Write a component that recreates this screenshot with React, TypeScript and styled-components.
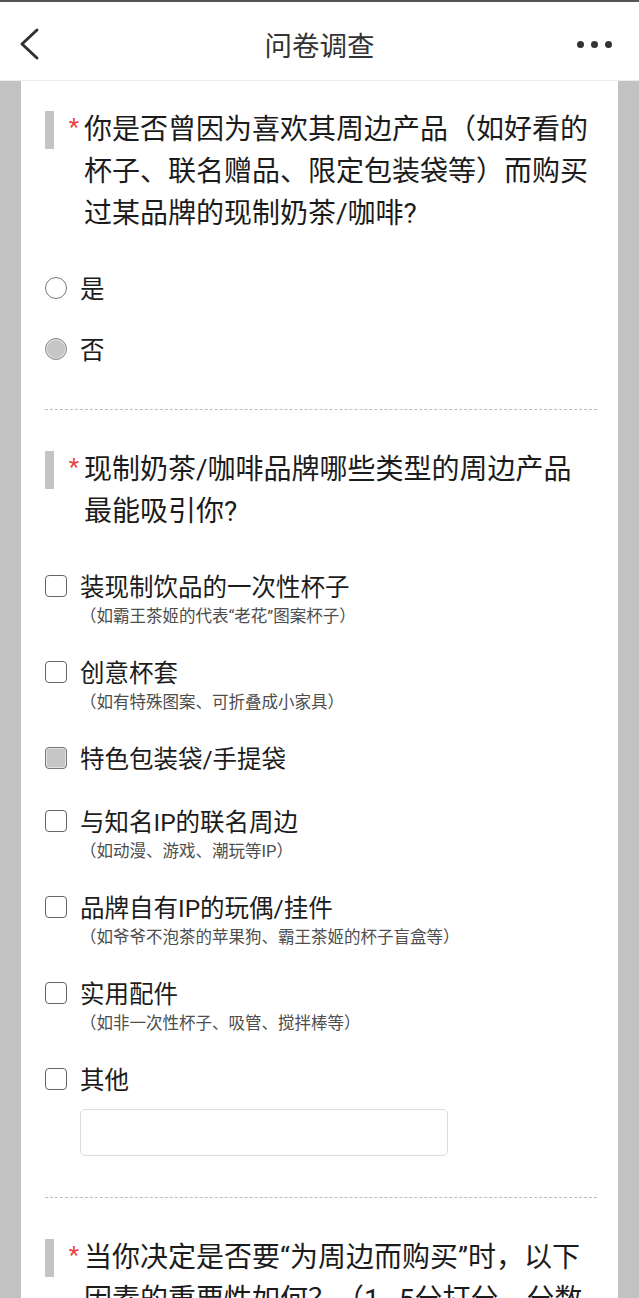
import React from "react";
import styled, { createGlobalStyle } from "styled-components";

const GlobalStyle = createGlobalStyle`
  html, body {
    margin: 0;
    padding: 0;
  }
  body {
    background: #c2c2c2;
    font-family: Roboto, "Noto Sans CJK SC", sans-serif;
    color: #1c1c1c;
  }
`;

const Header = styled.header`
  display: grid;
  grid-template-columns: 1fr auto 1fr;
  align-items: center;
  height: 72px;
  padding: 6px 27px 0 27px;
  background: #fff;
  border-top: 2px solid #555;
  border-bottom: 1px solid #ececec;
`;

const Title = styled.h1`
  margin: 0;
  font-size: 27.5px;
  font-weight: 400;
  color: #333;
`;

const BackIcon = styled.svg`
  width: 22px;
  height: 34px;
  margin-left: -9px;
`;

const Dots = styled.div`
  display: flex;
  justify-self: end;
  gap: 7px;
  span {
    width: 7px;
    height: 7px;
    border-radius: 50%;
    background: #333;
  }
`;

const Card = styled.main`
  margin: 0 21px;
  background: #fff;
  min-height: 1400px;
`;

const Section = styled.section<{ $first?: boolean; $last?: boolean }>`
  margin: 0 21px 0 24px;
  padding: ${(p) => (p.$first ? 28 : 39)}px 0 ${(p) => (p.$last ? 200 : 41)}px;
  border-bottom: ${(p) => (p.$last ? "none" : "1px dashed #bdbdbd")};
`;

const QTitle = styled.div`
  display: flex;
  align-items: flex-start;
`;

const Bar = styled.span`
  flex: none;
  width: 9px;
  height: 38px;
  margin-top: 2px;
  background: #c4c4c4;
`;

const Star = styled.span`
  flex: none;
  width: 30px;
  padding-right: 5px;
  box-sizing: border-box;
  text-align: right;
  font-size: 24px;
  line-height: 36px;
  color: #e4463e;
`;

const QText = styled.div`
  flex: 1;
  padding-right: 4px;
  font-size: 28px;
  line-height: 42px;
  color: #1c1c1c;
`;

const Options = styled.div<{ $gap: number }>`
  display: flex;
  flex-direction: column;
  gap: ${(p) => p.$gap}px;
  margin-top: 33px;
`;

const Option = styled.label`
  display: flex;
  flex-direction: column;
`;

const OptionRow = styled.div`
  display: flex;
  align-items: center;
  height: 39px;
  gap: 13px;
`;

const OptionText = styled.span`
  font-size: 24.5px;
  color: #1c1c1c;
`;

const SubText = styled.span`
  padding-left: 35px;
  font-size: 16.5px;
  line-height: 23px;
  color: #4d4d4d;
`;

const Radio = styled.span<{ $checked?: boolean }>`
  flex: none;
  box-sizing: border-box;
  width: 22px;
  height: 22px;
  border-radius: 50%;
  border: 1.5px solid ${(p) => (p.$checked ? "#8a8a8a" : "#777")};
  background: ${(p) => (p.$checked ? "#c6c6c6" : "#fff")};
  box-shadow: ${(p) => (p.$checked ? "inset 0 0 0 1px #e6e6e6" : "none")};
`;

const Check = styled.span<{ $checked?: boolean }>`
  flex: none;
  box-sizing: border-box;
  width: 22px;
  height: 22px;
  border-radius: 4px;
  border: 1.8px solid ${(p) => (p.$checked ? "#777" : "#666")};
  background: ${(p) => (p.$checked ? "#c6c6c6" : "#fff")};
  box-shadow: ${(p) => (p.$checked ? "inset 0 0 0 1px #e2e2e2" : "none")};
`;

const OtherInput = styled.input`
  display: block;
  box-sizing: border-box;
  width: 368px;
  height: 47px;
  margin: 11px 0 0 35px;
  border: 1px solid #dcdcdc;
  border-radius: 5px;
  font-size: 18px;
  outline: none;
`;

type Choice = { label: string; sub?: string; checked?: boolean };

const cupChoices: Choice[] = [
  { label: "装现制饮品的一次性杯子", sub: "（如霸王茶姬的代表“老花”图案杯子）" },
  { label: "创意杯套", sub: "（如有特殊图案、可折叠成小家具）" },
  { label: "特色包装袋/手提袋", checked: true },
  { label: "与知名IP的联名周边", sub: "（如动漫、游戏、潮玩等IP）" },
  { label: "品牌自有IP的玩偶/挂件", sub: "（如爷爷不泡茶的苹果狗、霸王茶姬的杯子盲盒等）" },
  { label: "实用配件", sub: "（如非一次性杯子、吸管、搅拌棒等）" },
  { label: "其他" },
];

const QuestionTitle = ({ children }: { children: React.ReactNode }) => (
  <QTitle>
    <Bar />
    <Star>*</Star>
    <QText>{children}</QText>
  </QTitle>
);

export default function App() {
  return (
    <>
      <GlobalStyle />
      <Header>
        <BackIcon viewBox="0 0 22 34">
          <polyline
            points="19,3 4,17 19,31"
            fill="none"
            stroke="#333"
            strokeWidth="3"
            strokeLinecap="round"
            strokeLinejoin="round"
          />
        </BackIcon>
        <Title>问卷调查</Title>
        <Dots>
          <span />
          <span />
          <span />
        </Dots>
      </Header>
      <Card>
        <Section $first>
          <QuestionTitle>
            你是否曾因为喜欢其周边产品（如好看的杯子、联名赠品、限定包装袋等）而购买过某品牌的现制奶茶/咖啡?
          </QuestionTitle>
          <Options $gap={22}>
            <Option>
              <OptionRow>
                <Radio />
                <OptionText>是</OptionText>
              </OptionRow>
            </Option>
            <Option>
              <OptionRow>
                <Radio $checked />
                <OptionText>否</OptionText>
              </OptionRow>
            </Option>
          </Options>
        </Section>
        <Section>
          <QuestionTitle>现制奶茶/咖啡品牌哪些类型的周边产品最能吸引你?</QuestionTitle>
          <Options $gap={24}>
            {cupChoices.map((item) => (
              <Option key={item.label}>
                <OptionRow>
                  <Check $checked={item.checked} />
                  <OptionText>{item.label}</OptionText>
                </OptionRow>
                {item.sub && <SubText>{item.sub}</SubText>}
              </Option>
            ))}
          </Options>
          <OtherInput type="text" />
        </Section>
        <Section $last>
          <QuestionTitle>
            当你决定是否要“为周边而购买”时，以下因素的重要性如何？（1~5分打分，分数越高越重要）
          </QuestionTitle>
        </Section>
      </Card>
    </>
  );
}
